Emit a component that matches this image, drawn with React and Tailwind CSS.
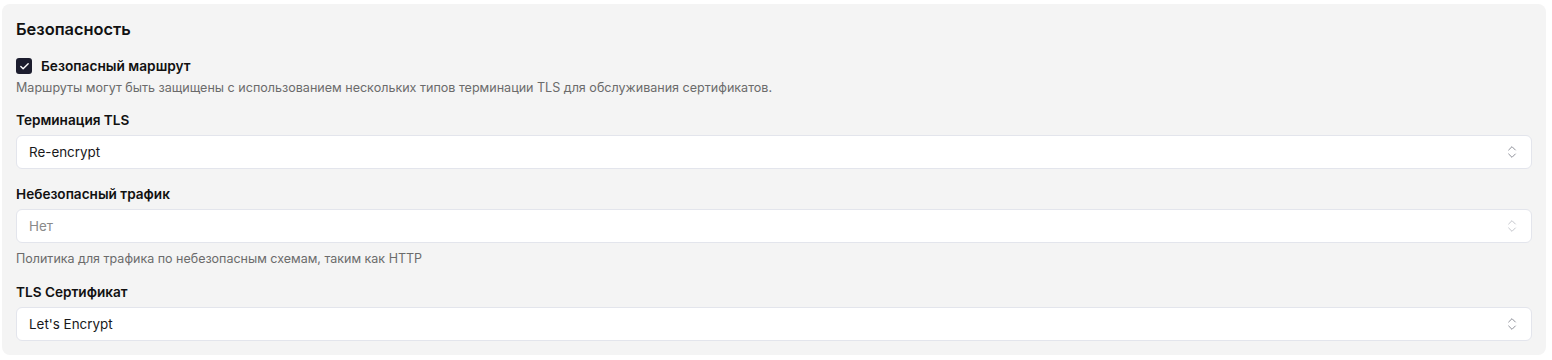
import React, { useState } from 'react';
import { Check, ChevronsUpDown } from 'lucide-react';

const font = { fontFamily: 'Inter, "Noto Sans", sans-serif' };

const SelectBox = ({ value, placeholder }) => (
    <div className="flex h-[34px] items-center justify-between rounded-md border border-[#e3e5ec] bg-white pl-[12px] pr-[11px]">
        <span className={`text-[13.4px] ${placeholder ? 'text-[#8a8a8a]' : 'text-[#18181b]'}`}>{value}</span>
        <ChevronsUpDown size={16} strokeWidth={1.5} className={placeholder ? 'text-[#c4c6cc]' : 'text-[#8e9099]'} />
    </div>
);

const App = () => {
    const [secure, setSecure] = useState(true);

    return (
        <div className="min-h-screen bg-white pl-[2px] pr-[6px] pt-[4px]" style={font}>
            <div className="rounded-lg bg-[#f4f4f4] px-[14px] pt-[14px] pb-[14px]">
                <h2 className="text-[16.4px] font-semibold leading-[22px] text-[#111]">Безопасность</h2>

                {/* Secure route */}
                <label className="mt-[18px] flex items-center gap-[9px] cursor-pointer">
                    <button
                        onClick={() => setSecure(!secure)}
                        className="flex h-4 w-4 items-center justify-center rounded-[3px] bg-[#1c1d2e] text-white"
                    >
                        {secure && <Check size={11} strokeWidth={3} />}
                    </button>
                    <span className="text-[13.7px] font-semibold leading-4 text-[#111]">Безопасный маршрут</span>
                </label>
                <p className="mt-[6px] text-[12.55px] leading-4 text-[#6b6b6b]">
                    Маршруты могут быть защищены с использованием нескольких типов терминации TLS для обслуживания сертификатов.
                </p>

                <div className="mt-[14px] text-[13.6px] font-semibold leading-5 text-[#111]">Терминация TLS</div>
                <div className="mt-[5px]">
                    <SelectBox value="Re-encrypt" />
                </div>

                <div className="mt-[15px] text-[13.6px] font-semibold leading-5 text-[#111]">Небезопасный трафик</div>
                <div className="mt-[5px]">
                    <SelectBox value="Нет" placeholder />
                </div>
                <p className="mt-[8px] text-[12.5px] leading-4 text-[#6b6b6b]">
                    Политика для трафика по небезопасным схемам, таким как HTTP
                </p>

                <div className="mt-[15px] text-[13.6px] font-semibold leading-5 text-[#111]">TLS Сертификат</div>
                <div className="mt-[5px]">
                    <SelectBox value="Let's Encrypt" />
                </div>
            </div>
        </div>
    );
};

export default App;
